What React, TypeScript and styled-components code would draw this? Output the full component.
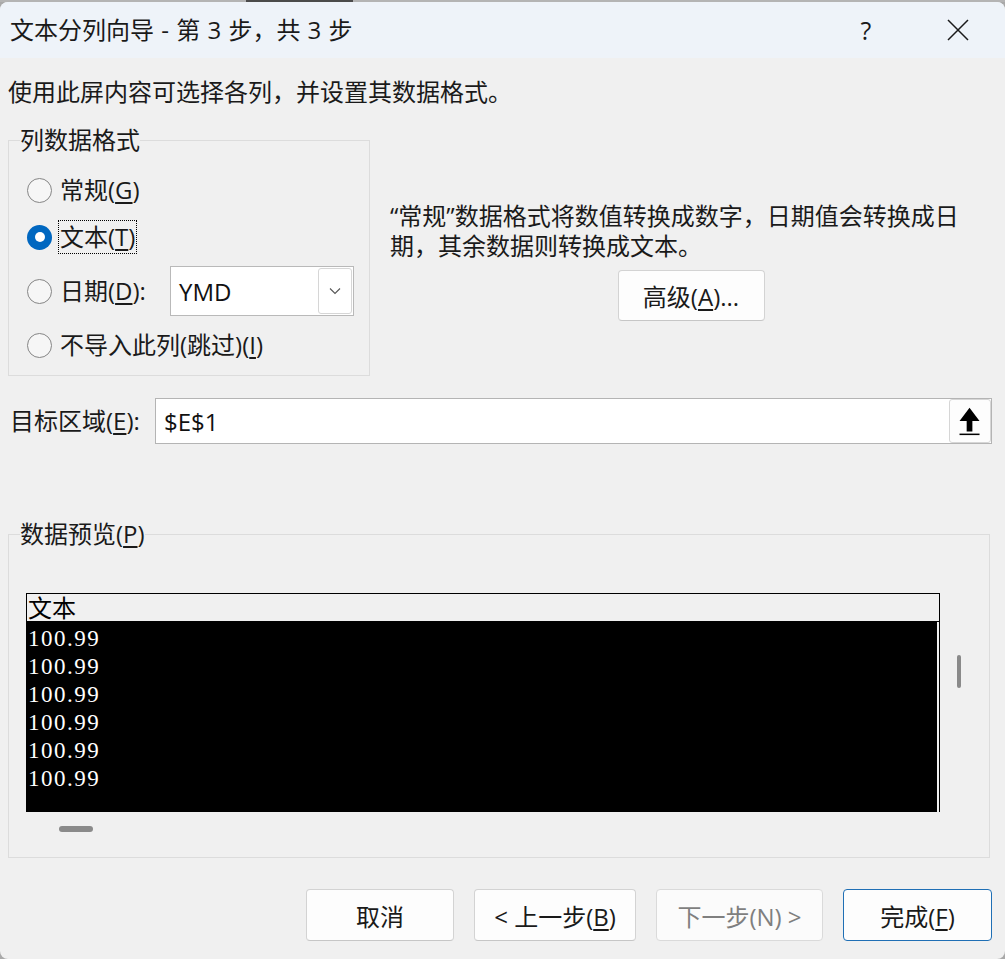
import React from 'react';
import styled, { createGlobalStyle, css } from 'styled-components';

const UI_FONT = `"Open Sans", "Noto Sans CJK SC", sans-serif`;
const LIST_FONT = `"Liberation Serif", "Noto Sans CJK SC", serif`;

const GlobalStyle = createGlobalStyle`
  html, body { margin: 0; padding: 0; }
  body {
    background: #a9a9a9;
    font-family: ${UI_FONT};
    color: #1a1a1a;
  }
`;

// the window behind the dialog, only a sliver of it shows at the top
const BackStrip = styled.div`
  height: 2px;
  background: linear-gradient(to right, #b4b4b4 0 246px, #4b4b4b 246px 353px, #b4b4b4 353px);
`;

const Window = styled.div`
  height: 957px;
  background: #f0f0f0;
  border-radius: 8px;
  overflow: hidden;
  display: flex;
  flex-direction: column;
`;

const TitleBar = styled.div`
  height: 56px;
  flex: none;
  background: #eef3f9;
  display: flex;
  align-items: center;
  padding-left: 10px;
`;

const Title = styled.div`
  font-size: 24px;
  line-height: 32px;
  color: #1a1a1a;
  word-spacing: 1px;
`;

const TitleControls = styled.div`
  margin-left: auto;
  display: flex;
  gap: 46px;
  padding-right: 24px;
`;

const TitleButton = styled.span`
  width: 46px;
  height: 40px;
  display: flex;
  align-items: center;
  justify-content: center;
  font-size: 25px;
  color: #1a1a1a;
`;

const Body = styled.div`
  padding: 0 13px 0 8px;
  display: flex;
  flex-direction: column;
`;

const Intro = styled.div`
  margin-top: 18px;
  font-size: 24px;
  line-height: 32px;
`;

const Key = styled.u`
  text-underline-offset: 3px;
  text-decoration-thickness: 1.5px;
`;

const GroupBox = styled.fieldset<{ $pad: string; $width?: string }>`
  margin: 0;
  min-width: 0;
  box-sizing: border-box;
  width: ${(p) => p.$width ?? 'auto'};
  border: 1px solid #dcdcdc;
  padding: ${(p) => p.$pad};
`;

const GroupTitle = styled.legend`
  margin-left: 11px;
  padding: 0;
  font-size: 24px;
  line-height: 24px;
  color: #1a1a1a;
`;

const TopRow = styled.div`
  margin-top: 20px;
  display: flex;
  align-items: flex-start;
`;

const OptionList = styled.div`
  display: flex;
  flex-direction: column;
  gap: 11px;
  padding-left: 18px;
`;

const OptionRow = styled.div<{ $tall?: boolean }>`
  display: flex;
  align-items: center;
  height: ${(p) => (p.$tall ? 50 : 36)}px;
`;

const RadioDot = styled.span<{ $checked?: boolean }>`
  width: 25px;
  height: 25px;
  flex: none;
  box-sizing: border-box;
  border-radius: 50%;
  display: flex;
  align-items: center;
  justify-content: center;
  ${(p) =>
    p.$checked
      ? css`
          background: #0067c0;
          &::after {
            content: '';
            width: 10px;
            height: 10px;
            border-radius: 50%;
            background: #fff;
          }
        `
      : css`
          background: #f6f6f6;
          border: 1.5px solid #858585;
        `}
`;

const OptionLabel = styled.span<{ $focused?: boolean }>`
  margin-left: 6px;
  padding: 0 1px;
  border: 1px dotted ${(p) => (p.$focused ? '#000' : 'transparent')};
  font-size: 24px;
  line-height: 32px;
  white-space: nowrap;
`;

const Combo = styled.div`
  margin-left: auto;
  width: 184px;
  height: 50px;
  box-sizing: border-box;
  border: 1px solid #b9b9b9;
  background: #fff;
  display: flex;
  align-items: center;
  padding: 1px 1px 1px 8px;
`;

const ComboValue = styled.span`
  flex: 1;
  font-size: 24px;
  color: #111;
`;

const ComboButton = styled.span`
  width: 34px;
  height: 46px;
  box-sizing: border-box;
  border: 1px solid #d6d6d6;
  border-radius: 3px;
  display: flex;
  align-items: center;
  justify-content: center;
`;

const InfoColumn = styled.div`
  flex: 1;
  margin-left: 20px;
  padding-top: 73px;
  display: flex;
  flex-direction: column;
  align-items: center;
`;

const Description = styled.div`
  align-self: stretch;
  font-size: 24px;
  line-height: 30px;
  white-space: nowrap;
`;

const PushButton = styled.button<{ $width: number; $height?: number; $primary?: boolean }>`
  width: ${(p) => p.$width}px;
  height: ${(p) => p.$height ?? 52}px;
  box-sizing: border-box;
  padding: 0;
  background: #fdfdfd;
  border: 1px solid ${(p) => (p.$primary ? '#1f6fb5' : '#d3d3d3')};
  border-bottom-color: ${(p) => (p.$primary ? '#1f6fb5' : '#c6c6c6')};
  border-radius: 4px;
  font-family: ${UI_FONT};
  font-size: 24px;
  color: #1a1a1a;
  white-space: nowrap;

  &:disabled {
    color: #7f7f7f;
    background: #fbfbfb;
    border-color: #dadada;
  }
`;

const AdvancedButton = styled(PushButton)`
  margin-top: 9px;
`;

const TargetRow = styled.div`
  margin-top: 22px;
  display: flex;
  align-items: center;
`;

const FieldLabel = styled.span`
  width: 147px;
  flex: none;
  padding-left: 2px;
  box-sizing: border-box;
  font-size: 24px;
  line-height: 32px;
  white-space: nowrap;
`;

const TextField = styled.div`
  flex: 1;
  height: 46px;
  box-sizing: border-box;
  border: 1px solid #b4b4b4;
  background: #fff;
  display: flex;
  align-items: center;
  padding: 0 0 0 8px;
`;

const FieldValue = styled.span`
  flex: 1;
  font-size: 24px;
  color: #111;
`;

const CollapseButton = styled.span`
  width: 42px;
  height: 44px;
  box-sizing: border-box;
  border: 1px solid #d6d6d6;
  border-radius: 3px;
  background: #fdfdfd;
  display: flex;
  align-items: center;
  justify-content: center;
`;

const PreviewGroup = styled(GroupBox)`
  margin-top: 78px;
  margin-right: 2px;
`;

const PreviewGrid = styled.div`
  margin-left: 17px;
  display: grid;
  grid-template-columns: 914px 1fr;
  grid-template-rows: 219px 45px;
`;

const ListBox = styled.div`
  border: 1px solid #000;
  border-bottom: none;
  display: flex;
  flex-direction: column;
  overflow: hidden;
`;

const ListHeader = styled.div`
  height: 25px;
  padding-top: 2px;
  flex: none;
  border-bottom: 1px solid #000;
  background: #f0f0f0;
  font-family: ${LIST_FONT};
  font-size: 24px;
  line-height: 27px;
  padding-left: 1px;
  color: #000;
`;

const ListRows = styled.div`
  flex: 1;
  padding-top: 3px;
  background: #000;
  margin-right: 2px;
`;

const ListRow = styled.div`
  height: 28px;
  line-height: 28px;
  padding-left: 1px;
  font-family: ${LIST_FONT};
  font-size: 23px;
  letter-spacing: 1.5px;
  color: #fff;
`;

const VTrack = styled.div`
  padding: 62px 0 0 17px;
`;

const VThumb = styled.div`
  width: 4px;
  height: 33px;
  border-radius: 2px;
  background: #8a8a8a;
`;

const HTrack = styled.div`
  grid-column: 1 / span 2;
  padding: 14px 0 0 33px;
`;

const HThumb = styled.div`
  width: 34px;
  height: 6px;
  border-radius: 3px;
  background: #8a8a8a;
`;

const ButtonRow = styled.div`
  margin-top: 31px;
  display: flex;
  justify-content: flex-end;
  gap: 20px;
`;

const CloseIcon = () => (
  <svg width="22" height="22" viewBox="0 0 22 22">
    <path d="M1 1 L21 21 M21 1 L1 21" stroke="#1a1a1a" strokeWidth="1.5" fill="none" />
  </svg>
);

const ChevronDown = () => (
  <svg width="12" height="8" viewBox="0 0 12 8">
    <path d="M1 1.5 L6 6.5 L11 1.5" stroke="#555" strokeWidth="1.1" fill="none" />
  </svg>
);

const CollapseIcon = () => (
  <svg width="42" height="44" viewBox="0 0 42 44">
    <path d="M20.5 8 L31 22 L23.5 22 L23.5 33 L17.5 33 L17.5 22 L10 22 Z" fill="#000" />
    <path d="M10 36 L31 36" stroke="#000" strokeWidth="1.6" />
  </svg>
);

const formats = [
  { label: '常规', key: 'G', checked: false },
  { label: '文本', key: 'T', checked: true },
];

const previewRows = ['100.99', '100.99', '100.99', '100.99', '100.99', '100.99'];

export default function App() {
  return (
    <>
      <GlobalStyle />
      <BackStrip />
      <Window>
        <TitleBar>
          <Title>文本分列向导 - 第 3 步，共 3 步</Title>
          <TitleControls>
            <TitleButton>?</TitleButton>
            <TitleButton>
              <CloseIcon />
            </TitleButton>
          </TitleControls>
        </TitleBar>

        <Body>
          <Intro>使用此屏内容可选择各列，并设置其数据格式。</Intro>

          <TopRow>
            <GroupBox $width="362px" $pad="20px 15px 12px 0">
              <GroupTitle>列数据格式</GroupTitle>
              <OptionList>
                {formats.map((f) => (
                  <OptionRow key={f.key}>
                    <RadioDot $checked={f.checked} />
                    <OptionLabel $focused={f.checked}>
                      {f.label}(<Key>{f.key}</Key>)
                    </OptionLabel>
                  </OptionRow>
                ))}
                <OptionRow $tall>
                  <RadioDot />
                  <OptionLabel>
                    日期(<Key>D</Key>):
                  </OptionLabel>
                  <Combo>
                    <ComboValue>YMD</ComboValue>
                    <ComboButton>
                      <ChevronDown />
                    </ComboButton>
                  </Combo>
                </OptionRow>
                <OptionRow>
                  <RadioDot />
                  <OptionLabel>
                    不导入此列(跳过)(<Key>I</Key>)
                  </OptionLabel>
                </OptionRow>
              </OptionList>
            </GroupBox>

            <InfoColumn>
              <Description>
                “常规”数据格式将数值转换成数字，日期值会转换成日
                <br />
                期，其余数据则转换成文本。
              </Description>
              <AdvancedButton $width={147} $height={51}>
                高级(<Key>A</Key>)...
              </AdvancedButton>
            </InfoColumn>
          </TopRow>

          <TargetRow>
            <FieldLabel>
              目标区域(<Key>E</Key>):
            </FieldLabel>
            <TextField>
              <FieldValue>$E$1</FieldValue>
              <CollapseButton>
                <CollapseIcon />
              </CollapseButton>
            </TextField>
          </TargetRow>

          <PreviewGroup $pad="47px 0 0 0">
            <GroupTitle>
              数据预览(<Key>P</Key>)
            </GroupTitle>
            <PreviewGrid>
              <ListBox>
                <ListHeader>文本</ListHeader>
                <ListRows>
                  {previewRows.map((v, i) => (
                    <ListRow key={i}>{v}</ListRow>
                  ))}
                </ListRows>
              </ListBox>
              <VTrack>
                <VThumb />
              </VTrack>
              <HTrack>
                <HThumb />
              </HTrack>
            </PreviewGrid>
          </PreviewGroup>

          <ButtonRow>
            <PushButton $width={148}>取消</PushButton>
            <PushButton $width={162}>
              &lt; 上一步(<Key>B</Key>)
            </PushButton>
            <PushButton $width={167} disabled>
              下一步(N) &gt;
            </PushButton>
            <PushButton $width={149} $primary>
              完成(<Key>F</Key>)
            </PushButton>
          </ButtonRow>
        </Body>
      </Window>
    </>
  );
}
